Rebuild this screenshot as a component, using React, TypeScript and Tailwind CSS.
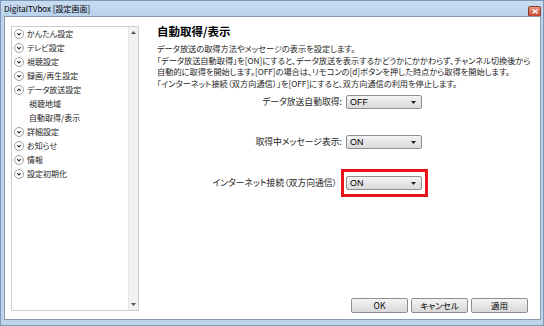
import React from "react";

const jp = "font-['Noto_Sans_CJK_JP',sans-serif] [font-feature-settings:'palt']";

interface NavItem {
  label: string;
  sub?: boolean;
  open?: boolean;
}

const navItems: NavItem[] = [
  { label: "かんたん設定" },
  { label: "テレビ設定" },
  { label: "視聴設定" },
  { label: "録画/再生設定" },
  { label: "データ放送設定", open: true },
  { label: "視聴地域", sub: true },
  { label: "自動取得/表示", sub: true },
  { label: "詳細設定" },
  { label: "お知らせ" },
  { label: "情報" },
  { label: "設定初期化" },
];

function Chevron({ open }: { open?: boolean }) {
  return (
    <svg width="10" height="10" viewBox="0 0 10 10" className="shrink-0">
      <circle cx="5" cy="5" r="4.5" fill="#fff" stroke="#8a8a8a" strokeWidth="0.8" />
      {open ? (
        <path d="M3.2 5.8 L5 4 L6.8 5.8" fill="none" stroke="#333" strokeWidth="1.1" />
      ) : (
        <path d="M3.2 4.2 L5 6 L6.8 4.2" fill="none" stroke="#333" strokeWidth="1.1" />
      )}
    </svg>
  );
}

function Select({ value }: { value: string }) {
  return (
    <div className="w-[76px] h-[14px] flex items-center justify-between pl-[3px] pr-[5px] border border-[#8e8f8f] rounded-[2px] bg-gradient-to-b from-[#f4f4f4] to-[#dadada] text-[9px] leading-none text-black">
      <span className="font-['Liberation_Sans',sans-serif]">{value}</span>
      <svg width="5" height="3" viewBox="0 0 5 3">
        <path d="M0 0 H5 L2.5 3 Z" fill="#222" />
      </svg>
    </div>
  );
}

function Button({ label }: { label: string }) {
  return (
    <div className="w-[57px] h-[15px] flex items-center justify-center border border-[#8e8f8f] rounded-[2px] bg-gradient-to-b from-[#f4f4f4] to-[#d8d8d8] text-[8.5px] leading-none text-black">
      {label}
    </div>
  );
}

export default function App() {
  return (
    <div className={`w-[544px] h-[326px] flex flex-col bg-[#bcd3ec] border border-[#7c98b8] ${jp}`}>
      {/* title bar */}
      <div className="h-[15px] flex items-center justify-between pl-[3px] pr-[2px] bg-gradient-to-b from-[#c9dcf1] to-[#bad2ec]">
        <span className="text-[8px] leading-none text-black">DigitalTVbox [設定画面]</span>
        <div className="w-[13px] h-[11px] mt-[5px] rounded-[2px] border border-[#8a3b2a] bg-gradient-to-b from-[#e89a82] to-[#c8432a] flex items-center justify-center">
          <svg width="6" height="5" viewBox="0 0 6 5">
            <path d="M0.5 0.5 L5.5 4.5 M5.5 0.5 L0.5 4.5" stroke="#fff" strokeWidth="1.3" />
          </svg>
        </div>
      </div>

      {/* client area */}
      <div className="flex-1 ml-[3px] mr-[2px] mb-[5px] border border-[#8a9bb0] bg-white flex pl-[6px] pr-[12px] pt-[9px] pb-[6px]">
        {/* sidebar */}
        <div className="w-[128px] shrink-0 mb-[2px] border border-[#cfcfcf] flex">
          <div className="flex-1 flex flex-col">
            {navItems.map((item) => (
              <div
                key={item.label}
                className={`h-[14px] flex items-center gap-[3px] text-[8px] leading-none text-[#1e1e1e] ${item.sub ? "pl-[17px]" : "pl-[2px]"}`}
              >
                {!item.sub && <Chevron open={item.open} />}
                <span>{item.label}</span>
              </div>
            ))}
          </div>
          <div className="w-[10px] border-l border-[#e6e6e6] bg-[#f1f1f1] flex flex-col items-center justify-between py-[4px]">
            <svg width="5" height="3" viewBox="0 0 5 3">
              <path d="M0 3 H5 L2.5 0 Z" fill="#555" />
            </svg>
            <svg width="5" height="3" viewBox="0 0 5 3">
              <path d="M0 0 H5 L2.5 3 Z" fill="#555" />
            </svg>
          </div>
        </div>

        {/* main */}
        <div className="flex-1 min-w-0 ml-[18px] flex flex-col">
          <div className="text-[11.5px] font-bold leading-[15px] -mt-[2px] text-black">自動取得/表示</div>
          <div className="mt-[4px] text-[8.2px] leading-[11.5px] text-[#1e1e1e] whitespace-nowrap">
            <div>データ放送の取得方法やメッセージの表示を設定します。</div>
            <div>「データ放送自動取得」を[ON]にすると、データ放送を表示するかどうかにかかわらず、チャンネル切換後から</div>
            <div>自動的に取得を開始します。[OFF]の場合は、リモコンの[d]ボタンを押した時点から取得を開始します。</div>
            <div>「インターネット接続（双方向通信）」を[OFF]にすると、双方向通信の利用を停止します。</div>
          </div>

          <div className="mt-[6px] flex items-center">
            <div className="w-[189px] pr-[4px] text-right text-[8.8px] leading-none text-[#1e1e1e]">データ放送自動取得:</div>
            <Select value="OFF" />
          </div>
          <div className="mt-[26px] flex items-center">
            <div className="w-[189px] pr-[4px] text-right text-[8.8px] leading-none text-[#1e1e1e]">取得中メッセージ表示:</div>
            <Select value="ON" />
          </div>
          <div className="mt-[20px] flex items-center">
            <div className="w-[189px] pr-[9px] text-right text-[8.8px] leading-none text-[#1e1e1e]">インターネット接続（双方向通信）</div>
            <div className="-ml-[5px] border-[3px] border-[#e8141b] pl-[2px] pr-[3px] py-[4px]">
              <Select value="ON" />
            </div>
          </div>

          <div className="mt-auto flex justify-end gap-[3px]">
            <Button label="OK" />
            <Button label="キャンセル" />
            <Button label="適用" />
          </div>
        </div>
      </div>
    </div>
  );
}
